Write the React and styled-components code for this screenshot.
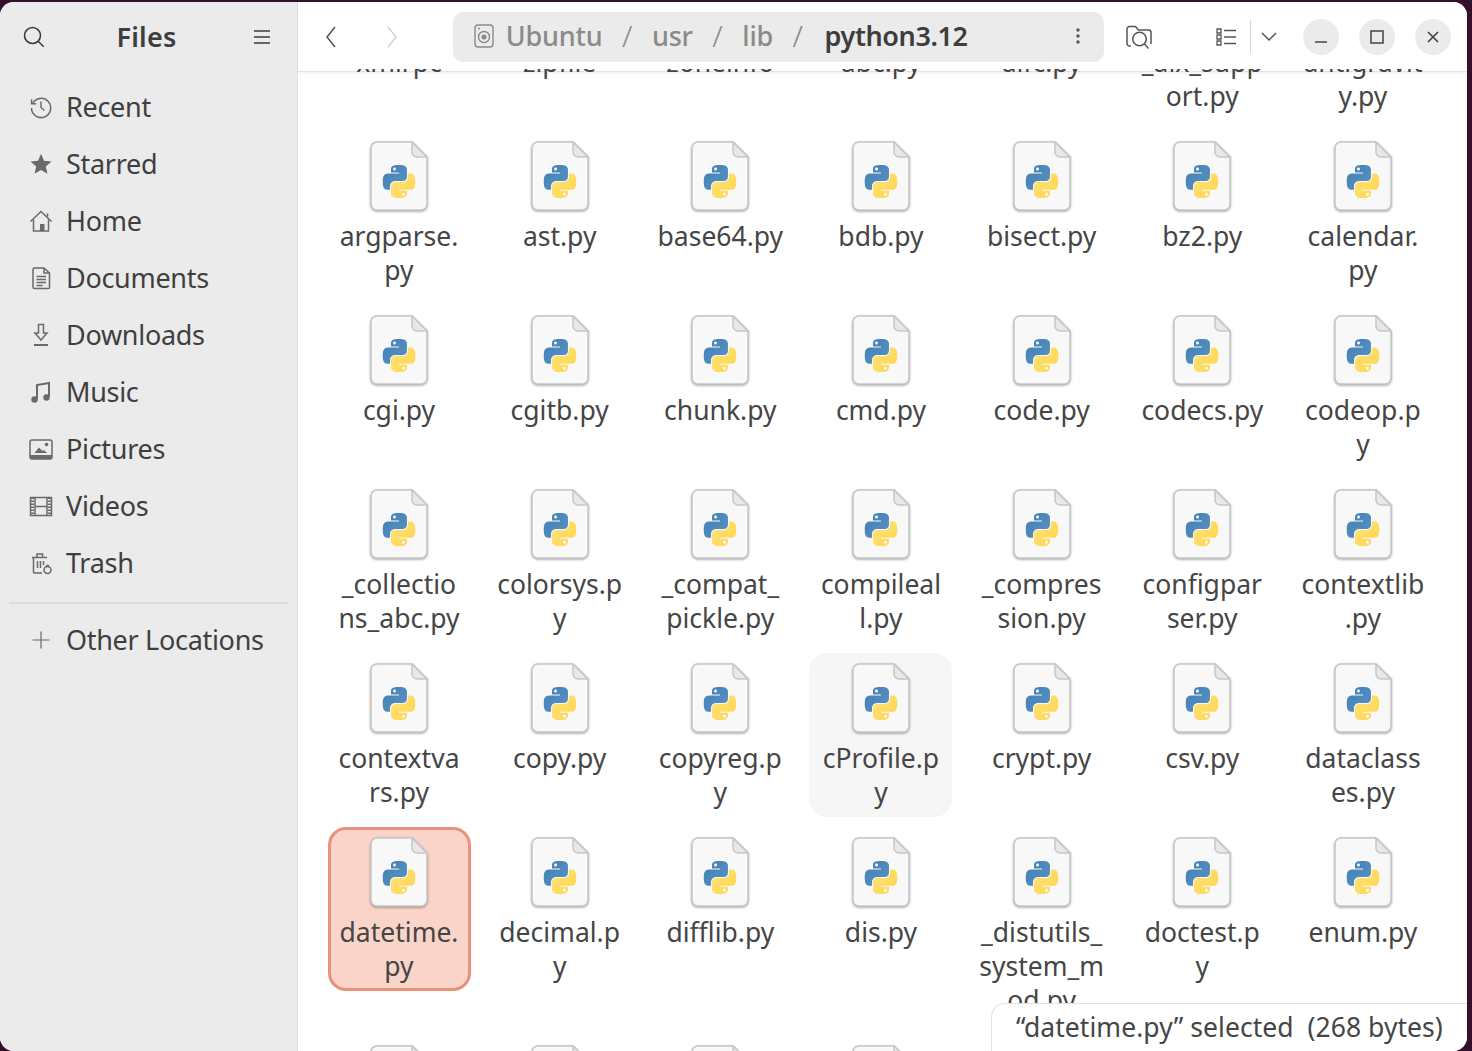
import React from "react";
import styled, { createGlobalStyle } from "styled-components";

const Global = createGlobalStyle`
  html, body { margin: 0; padding: 0; height: 100%; overflow: hidden; background: #34102c; }
  #root { height: 100%; }
  * { box-sizing: border-box; }
`;

const FONT = `"Noto Sans", "Open Sans", sans-serif`;

const Desktop = styled.div`
  height: 1051px;
  padding: 2px 5px 0 0;
  font-family: ${FONT};
  color: #3d3d3d;
`;
const Window = styled.div`
  display: flex;
  height: 1049px;
  background: #fff;
  border-radius: 14px;
  overflow: hidden;
`;
const Sidebar = styled.aside`
  width: 298px;
  flex: none;
  background: #ebebeb;
  border-right: 1px solid #e2e2e2;
  display: flex;
  flex-direction: column;
`;
const SideHead = styled.div`
  height: 70px;
  display: flex;
  align-items: center;
  justify-content: space-between;
  padding: 0 27px 0 23px;
`;
const Title = styled.div`
  font-size: 27px;
  font-weight: 600;
  letter-spacing: 0.2px;
  margin: 0 6px 2px 0;
`;
const Nav = styled.nav`
  padding-top: 6px;
  display: flex;
  flex-direction: column;
`;
const NavRow = styled.div`
  height: 57px;
  display: flex;
  align-items: center;
  gap: 13px;
  padding-left: 29px;
  font-size: 27px;
  letter-spacing: -0.3px;
  color: #3f3f3f;
`;
const NavIcon = styled.svg`
  width: 24px;
  height: 24px;
  flex: none;
  fill: none;
  stroke: #6a6a6a;
  stroke-width: ${(p) => (p.$thin ? 1.2 : 1.5)};
`;
const Divider = styled.hr`
  margin: 11px 9px 7px;
  border: 0;
  height: 2px;
  background: #dcdcdc;
`;
const Main = styled.main`
  flex: 1;
  min-width: 0;
  display: flex;
  flex-direction: column;
  position: relative;
`;
const Toolbar = styled.header`
  height: 70px;
  flex: none;
  display: flex;
  align-items: center;
  padding: 0 16px 0 2.5px;
  background: #fff;
  border-bottom: 1px solid #e4e4e4;
  box-shadow: 0 1px 3px rgba(0, 0, 0, 0.07);
  position: relative;
  z-index: 1;
`;
const NavBtn = styled.div`
  width: 61px;
  height: 36px;
  display: flex;
  align-items: center;
  justify-content: center;
  opacity: ${(p) => (p.$off ? 0.25 : 1)};
`;
const PathBar = styled.div`
  width: 652px;
  height: 50px;
  margin: 0 17px 0 30.5px;
  padding: 0 21px 2px;
  border-radius: 10px;
  background: #ebebeb;
  display: flex;
  align-items: center;
`;
const Crumb = styled.span`
  font-size: 27px;
  font-weight: ${(p) => (p.$current ? 600 : 500)};
  color: ${(p) => (p.$current ? "#3d3d3d" : "#8a8a8a")};
  letter-spacing: ${(p) => (p.$current ? "-0.4px" : "-0.2px")};
  margin-left: ${(p) => (p.$current ? "2px" : "0")};
`;
const Slash = styled.span`
  font-size: 30px;
  font-weight: 300;
  color: #8a8a8a;
  width: 49.5px;
  text-align: center;
`;
const Spacer = styled.div`
  flex: 1;
`;
const ToolIcon = styled.svg`
  flex: none;
  fill: none;
  stroke: #555;
  stroke-width: 1.5;
  margin-left: ${(p) => p.$ml || 0}px;
`;
const Sep = styled.div`
  width: 1px;
  height: 33px;
  margin: 0 10px 0 14px;
  background: #d4d4d4;
`;
const WinBtn = styled.div`
  width: 36px;
  height: 36px;
  border-radius: 50%;
  background: #ebebeb;
  display: flex;
  align-items: center;
  justify-content: center;
  margin-left: ${(p) => p.$ml || 20}px;
`;
const Scroll = styled.div`
  flex: 1;
  min-height: 0;
  margin-top: -3px;
  overflow: hidden;
  position: relative;
  z-index: 1;
`;
const Grid = styled.div`
  margin-top: -112px;
  padding-left: 29.5px;
  display: grid;
  grid-template-columns: repeat(7, 143px);
  column-gap: 17.67px;
  row-gap: 10px;
  align-items: start;
`;
const Item = styled.div`
  min-height: 164px;
  padding: 6px 0 5px;
  border: 3px solid ${(p) => (p.$selected ? "#e8927a" : "transparent")};
  border-radius: 18px;
  background: ${(p) => (p.$selected ? "#fad4c8" : p.$hover ? "#f6f6f6" : "transparent")};
  display: flex;
  flex-direction: column;
  align-items: center;
`;
const DocSvg = styled.svg`
  display: block;
  flex: none;
  filter: drop-shadow(0 1.5px 1px rgba(0, 0, 0, 0.35));
`;
const Label = styled.div`
  margin-top: 5px;
  font-size: 26.5px;
  line-height: 34px;
  text-align: center;
  white-space: pre;
  color: #454545;
`;
const Status = styled.div`
  position: absolute;
  right: 0;
  bottom: 0;
  left: 693px;
  height: 48px;
  padding: 3px 24px 0 24px;
  background: #fff;
  border: 1px solid #e4e4e4;
  border-width: 1px 0 0 1px;
  border-top-left-radius: 14px;
  font-size: 26.5px;
  letter-spacing: 0.05px;
  line-height: 40px;
  white-space: nowrap;
  color: #454545;
  z-index: 2;
`;

const PyDoc = () => (
  <DocSvg width="60" height="74" viewBox="0 0 60 74">
    <defs>
      <linearGradient id="pyb" x1="0" y1="0" x2="1" y2="1">
        <stop offset="0" stopColor="#3f7fb4" />
        <stop offset="1" stopColor="#5c93c2" />
      </linearGradient>
      <linearGradient id="pyy" x1="0" y1="0" x2="1" y2="1">
        <stop offset="0" stopColor="#ffe27a" />
        <stop offset="1" stopColor="#fed54c" />
      </linearGradient>
    </defs>
    <path
      d="M8 2H43L58 17V64a6 6 0 0 1-6 6H8a6 6 0 0 1-6-6V8a6 6 0 0 1 6-6Z"
      fill="#f8f8f8"
      stroke="#c6c6c6"
      strokeWidth="1.5"
    />
    <path
      d="M43 2V12a5 5 0 0 0 5 5H58Z"
      fill="#e8e8e8"
      stroke="#c6c6c6"
      strokeWidth="1.5"
      strokeLinejoin="round"
    />
    <svg x="13.500" y="25" width="33" height="33" viewBox="0 0 111 111">
      <path
        fill="url(#pyb)"
        d="M54.919.001c-4.584.022-8.961.413-12.812 1.095C30.76 3.099 28.7 7.295 28.7 15.032v10.219h26.813v3.406H18.638c-7.793 0-14.616 4.684-16.75 13.594-2.462 10.213-2.571 16.586 0 27.25 1.906 7.938 6.458 13.594 14.25 13.594h9.219V70.844c0-8.85 7.657-16.656 16.75-16.656h26.781c7.454 0 13.406-6.138 13.406-13.625V15.032c0-7.266-6.13-12.725-13.406-13.937C64.282.328 59.502-.02 54.919.001zM40.419 8.22c2.77 0 5.031 2.299 5.031 5.125 0 2.816-2.262 5.094-5.031 5.094-2.78 0-5.031-2.278-5.031-5.094 0-2.826 2.252-5.125 5.031-5.125z"
      />
      <path
        fill="url(#pyy)"
        d="M85.638 28.657v11.906c0 9.231-7.826 17-16.75 17H42.106c-7.336 0-13.406 6.278-13.406 13.625v25.531c0 7.266 6.319 11.54 13.406 13.625 8.487 2.496 16.626 2.947 26.781 0 6.75-1.954 13.406-5.888 13.406-13.625V86.501H55.513v-3.406h40.188c7.793 0 10.696-5.436 13.406-13.594 2.8-8.399 2.68-16.476 0-27.25-1.926-7.757-5.604-13.594-13.406-13.594H85.638zM70.575 93.313c2.78 0 5.031 2.278 5.031 5.094 0 2.826-2.252 5.125-5.031 5.125-2.77 0-5.031-2.299-5.031-5.125 0-2.816 2.262-5.094 5.031-5.094z"
      />
    </svg>
  </DocSvg>
);

const G = "#6a6a6a";
const places = [
  ["Recent", <><path d="M3.600 8.500A9.600 9.600 0 1 1 2.500 13" /><path d="M2.600 4.200v4.600h4.600" /><path d="M12 6.500v6l3.400 3" /></>],
  ["Starred", <path fill={G} stroke="none" d="M12 1.800l3 6.900 7.500.7-5.700 5 1.700 7.400L12 17.900l-6.500 3.900 1.700-7.400-5.700-5 7.500-.7z" />],
  ["Home", <><path d="M1.500 12.500L12 2.500l10.500 10" /><path d="M4.500 10.500v11.500h15V10.500" /><path fill={G} stroke="none" d="M11 15h4.500v7H11z" /><path d="M18.500 4.500v3" /></>],
  ["Documents", <><path d="M5.500 2H15l5.500 5v14.500a1 1 0 0 1-1 1h-14a1.500 1.500 0 0 1-1.500-1.500V3.500A1.500 1.500 0 0 1 5.500 2z" /><path d="M15 2v5h5.500" /><path d="M7.500 10.500h9.500M7.500 13.500h9.500M7.500 16.500h9.500M7.500 19.500h6" /></>],
  ["Downloads", <><path d="M9.500 1.500h5v8.500h3.500L12 17 6 10h3.500z" /><path strokeWidth="2" d="M5 22h14" /></>],
  ["Music", <><path strokeWidth="2" d="M8 19V5L20 3v14" /><circle fill={G} stroke="none" cx="5.500" cy="19.500" r="3.200" /><circle fill={G} stroke="none" cx="17.500" cy="17.500" r="3.200" /></>],
  ["Pictures", <><rect x="1" y="3" width="22" height="19" rx="2" /><path fill={G} stroke="none" d="M1 18h22v3a1 1 0 0 1-1 1H2a1 1 0 0 1-1-1zM5.500 16l4.500-5.500 3.500 3.500 1.500-1 3 3z" /><circle fill={G} stroke="none" cx="17.500" cy="7.500" r="1.800" /></>],
  ["Videos", <><rect x="1.500" y="3.500" width="21" height="18" /><path d="M6 3.500v18M18 3.500v18M6 12.500h12" /><path strokeWidth="3" strokeDasharray="1.500 1.500" d="M3.500 3.500v18M20.500 3.500v18" /></>],
  ["Trash", <><path d="M3 6.500h15" /><path d="M4.500 6.500V21a1 1 0 0 0 1 1H13" /><path d="M8 6V3h5.500v3" /><path d="M8.500 10v7M11.500 10v7M14.500 10v4" /><circle cx="18.500" cy="19" r="3.500" /><path d="M17 14.500h3" /></>],
];

const files = [
  "xmlrpc", "zipfile", "zoneinfo", "abc.py", "aifc.py", "_aix_supp\nort.py", "antigravit\ny.py",
  "argparse.\npy", "ast.py", "base64.py", "bdb.py", "bisect.py", "bz2.py", "calendar.\npy",
  "cgi.py", "cgitb.py", "chunk.py", "cmd.py", "code.py", "codecs.py", "codeop.p\ny",
  "_collectio\nns_abc.py", "colorsys.p\ny", "_compat_\npickle.py", "compileal\nl.py", "_compres\nsion.py", "configpar\nser.py", "contextlib\n.py",
  "contextva\nrs.py", "copy.py", "copyreg.p\ny", "cProfile.p\ny", "crypt.py", "csv.py", "dataclass\nes.py",
  "datetime.\npy", "decimal.p\ny", "difflib.py", "dis.py", "_distutils_\nsystem_m\nod.py", "doctest.p\ny", "enum.py",
  "filecmp.py", "fileinput.py", "fnmatch.py", "fractions.py",
];

export default function App() {
  return (
    <Desktop>
      <Global />
      <Window>
        <Sidebar>
          <SideHead>
            <svg width="22" height="22" viewBox="0 0 22 22" fill="none" stroke="#3d3d3d" strokeWidth="1.6">
              <circle cx="9.500" cy="9.500" r="8" />
              <path d="M15.200 15.200l5.500 5.500" />
            </svg>
            <Title>Files</Title>
            <svg width="16" height="14" viewBox="0 0 16 14" fill="none" stroke="#3d3d3d" strokeWidth="1.400">
              <path d="M0 1h16M0 7h16M0 13h16" />
            </svg>
          </SideHead>
          <Nav>
            {places.map(([name, icon]) => (
              <NavRow key={name}>
                <NavIcon viewBox="0 0 24 24">{icon}</NavIcon>
                {name}
              </NavRow>
            ))}
            <Divider />
            <NavRow>
              <NavIcon viewBox="0 0 24 24" $thin>
                <path d="M12 3.500v17M3.500 12h17" />
              </NavIcon>
              Other Locations
            </NavRow>
          </Nav>
        </Sidebar>
        <Main>
          <Toolbar>
            <NavBtn>
              <svg width="12" height="24" viewBox="0 0 12 24" fill="none" stroke="#555" strokeWidth="1.500">
                <path d="M10 2L2 12l8 10" />
              </svg>
            </NavBtn>
            <NavBtn $off>
              <svg width="12" height="24" viewBox="0 0 12 24" fill="none" stroke="#555" strokeWidth="1.500">
                <path d="M2 2l8 10-8 10" />
              </svg>
            </NavBtn>
            <PathBar>
              <svg width="20" height="24" viewBox="0 0 20 24" fill="none" stroke="#8a8a8a" strokeWidth="1.400" style={{ flex: "none", marginRight: 12 }}>
                <rect x="1" y="1" width="18" height="22" rx="3" />
                <circle cx="10" cy="13" r="5.500" />
                <circle cx="10" cy="13" r="1.800" fill="#8a8a8a" />
                <path d="M4 4.500h2" />
              </svg>
              <Crumb>Ubuntu</Crumb>
              <Slash>/</Slash>
              <Crumb>usr</Crumb>
              <Slash>/</Slash>
              <Crumb>lib</Crumb>
              <Slash>/</Slash>
              <Crumb $current>python3.12</Crumb>
              <Spacer />
              <svg width="4" height="16" viewBox="0 0 4 16" fill="#555" style={{ flex: "none", marginRight: 3 }}>
                <circle cx="2" cy="2" r="1.700" />
                <circle cx="2" cy="8" r="1.700" />
                <circle cx="2" cy="14" r="1.700" />
              </svg>
            </PathBar>
            <ToolIcon width="26" height="24" viewBox="0 0 26 24" $ml="5">
              <path d="M5 21H3.500A2.500 2.500 0 0 1 1 18.500V4a2.500 2.500 0 0 1 2.500-2.500h6l3 3.500h10A2.500 2.500 0 0 1 25 7.500V19" />
              <circle cx="13.500" cy="14" r="6.800" />
              <path d="M18.500 19l4 4.500" />
            </ToolIcon>
            <ToolIcon width="20" height="18" viewBox="0 0 20 18" $ml="64">
              <path d="M1 1h4v4H1zM1 7h4v4H1zM1 13h4v4H1z" strokeWidth="1.300" />
              <path d="M8 2.500h12M8 9h12M8 15.500h12" />
            </ToolIcon>
            <Sep />
            <svg width="16" height="9" viewBox="0 0 16 9" fill="none" stroke="#555" strokeWidth="1.500" style={{ flex: "none" }}>
              <path d="M1 1l7 7 7-7" />
            </svg>
            <WinBtn $ml="26">
              <svg width="14" height="14" viewBox="0 0 14 14" fill="none" stroke="#444" strokeWidth="1.500">
                <path d="M1 12h12" />
              </svg>
            </WinBtn>
            <WinBtn>
              <svg width="14" height="14" viewBox="0 0 14 14" fill="none" stroke="#444" strokeWidth="1.500">
                <rect x="1" y="1" width="12" height="12" />
              </svg>
            </WinBtn>
            <WinBtn>
              <svg width="14" height="14" viewBox="0 0 14 14" fill="none" stroke="#444" strokeWidth="1.700">
                <path d="M2 2l10 10M12 2L2 12" />
              </svg>
            </WinBtn>
          </Toolbar>
          <Scroll>
            <Grid>
              {files.map((f) => (
                <Item key={f} $selected={f.startsWith("datetime")} $hover={f.startsWith("cProfile")}>
                  <PyDoc />
                  <Label>{f}</Label>
                </Item>
              ))}
            </Grid>
          </Scroll>
          <Status>“datetime.py” selected&nbsp; (268 bytes)</Status>
        </Main>
      </Window>
    </Desktop>
  );
}
